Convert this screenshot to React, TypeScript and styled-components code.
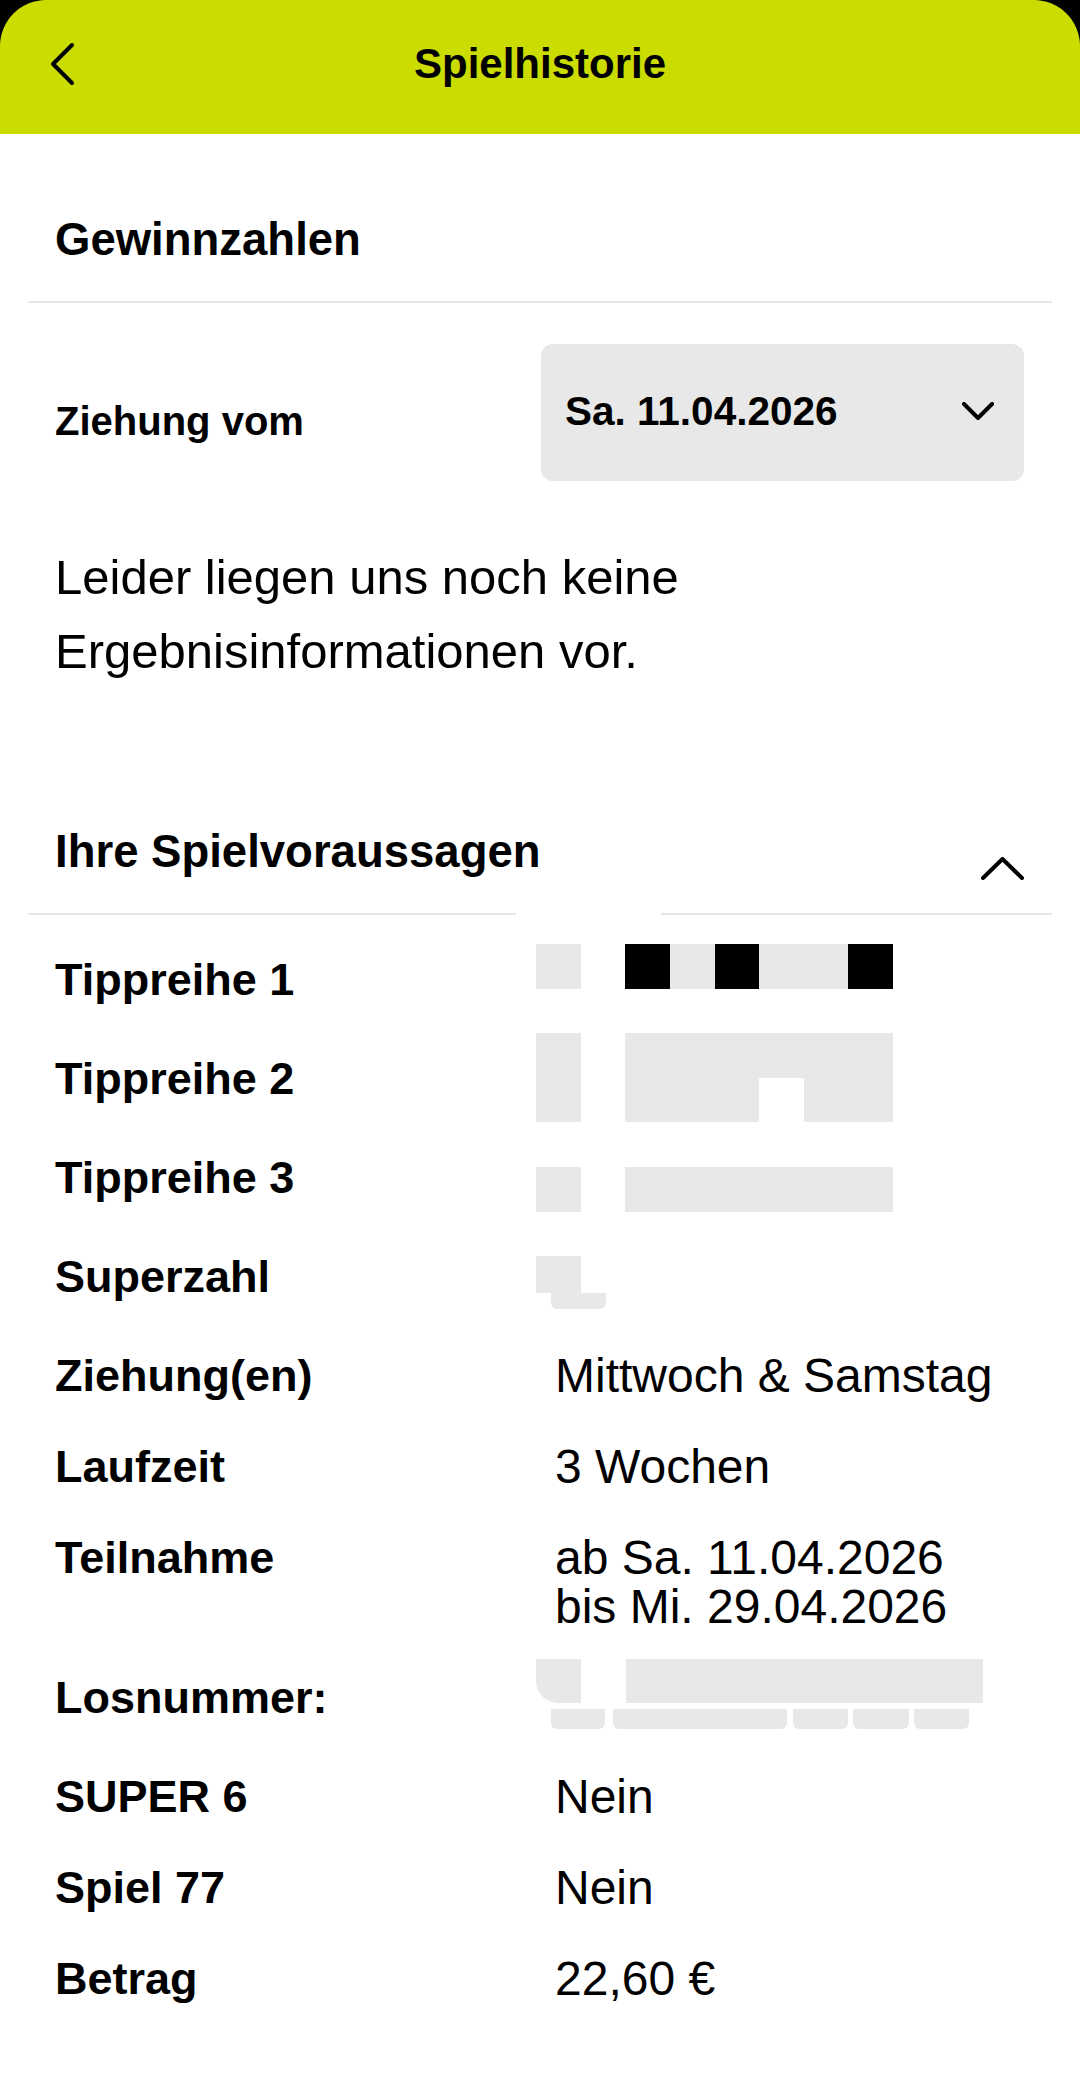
import React from "react";
import styled, { createGlobalStyle } from "styled-components";

const GlobalStyle = createGlobalStyle`
  html, body { margin: 0; padding: 0; background: #ffffff; }
  body {
    font-family: "Liberation Sans", Arial, sans-serif;
    color: #000000;
  }
  * { box-sizing: border-box; }
`;

const GRAY = "#e8e8e8";

const Screen = styled.div`
  width: 1080px;
  min-height: 2079px;
  background: #ffffff;
`;

const TopFrame = styled.div`
  background: #000000;
`;

const Header = styled.header`
  height: 134px;
  padding-top: 20px;
  background: #cadc00;
  border-radius: 46px 46px 0 0;
`;

const HeaderRow = styled.div`
  height: 88px;
  display: grid;
  grid-template-columns: 140px 1fr 140px;
  align-items: center;
`;

const BackButton = styled.button`
  border: 0;
  background: none;
  padding: 0 0 0 46px;
  height: 88px;
  display: flex;
  align-items: center;
  cursor: pointer;
  svg { display: block; }
`;

const Title = styled.h1`
  margin: 0;
  text-align: center;
  font-size: 42px;
  line-height: 88px;
  font-weight: 700;
`;

const SectionHead = styled.div<{ $top: number }>`
  margin: 0 28px;
  padding: ${(p) => p.$top}px 28px 33px 27px;
  display: flex;
  justify-content: space-between;
  align-items: flex-end;
  svg { display: block; }
`;

const Heading = styled.h2`
  margin: 0;
  font-size: 45.5px;
  line-height: 56px;
  font-weight: 700;
`;

const Divider = styled.div<{ $gap?: boolean }>`
  margin: 0 28px;
  height: 2px;
  background: ${(p) =>
    p.$gap
      ? `linear-gradient(to right, #e6e6e6 0 488px, transparent 488px 633px, #e6e6e6 633px)`
      : "#e6e6e6"};
`;

const DrawRow = styled.div`
  margin-top: 41px;
  padding: 0 56px 0 55px;
  display: grid;
  grid-template-columns: 1fr 483px;
  align-items: start;
`;

const DrawLabel = styled.div`
  padding-top: 53px;
  font-size: 40px;
  line-height: 48px;
  font-weight: 700;
`;

const DateSelect = styled.div`
  height: 137px;
  background: ${GRAY};
  border-radius: 12px;
  display: flex;
  align-items: center;
  justify-content: space-between;
  padding: 0 30px 4px 24px;
  svg { display: block; }
`;

const DateText = styled.span`
  font-size: 40.5px;
  line-height: 48px;
  font-weight: 700;
`;

const Notice = styled.p`
  margin: 59px 0 0;
  padding: 0 55px;
  font-size: 49px;
  line-height: 74px;
  font-weight: 400;
`;

const Table = styled.div`
  padding: 40px 28px 0 55px;
  display: flex;
  flex-direction: column;
  gap: 42px;
`;

const Row = styled.div<{ $tall?: boolean }>`
  display: grid;
  grid-template-columns: 481px 1fr;
  ${(p) => (p.$tall ? "height: 57px;" : "")}
`;

const Label = styled.div`
  font-size: 45px;
  line-height: 49px;
  font-weight: 700;
`;

const Value = styled.div`
  padding-left: 19px;
  font-size: 48px;
  line-height: 49px;
  font-weight: 400;
`;

const MaskCell = styled.div<{ $shift: number }>`
  margin-top: ${(p) => p.$shift}px;
`;

type Tone = "g" | "b" | "_";

const ChipGrid = styled.div`
  display: grid;
  grid-template-columns: repeat(8, 44.625px);
  grid-auto-rows: 44.5px;
`;

const Chip = styled.span<{ $tone: Tone }>`
  background: ${(p) =>
    p.$tone === "b" ? "#000000" : p.$tone === "g" ? GRAY : "transparent"};
`;

const MaskLine = styled.div<{ $top?: number }>`
  display: flex;
  margin-top: ${(p) => p.$top ?? 0}px;
`;

const Blot = styled.span<{ $w: number; $h: number; $x?: number; $round?: string }>`
  display: block;
  flex: none;
  width: ${(p) => p.$w}px;
  height: ${(p) => p.$h}px;
  margin-left: ${(p) => p.$x ?? 0}px;
  background: ${GRAY};
  border-radius: ${(p) => p.$round ?? "0"};
`;

const Chips = ({ rows }: { rows: string[] }) => (
  <ChipGrid>
    {rows.flatMap((r, ri) =>
      r.split("").map((t, ci) => <Chip key={`${ri}-${ci}`} $tone={t as Tone} />)
    )}
  </ChipGrid>
);

const BackIcon = () => (
  <svg width="32" height="48" viewBox="0 0 32 48" fill="none">
    <path
      d="M26 5 L7 24 L26 43"
      stroke="#000"
      strokeWidth="4"
      strokeLinecap="round"
      strokeLinejoin="round"
    />
  </svg>
);

const ChevronDown = () => (
  <svg width="32" height="18" viewBox="0 0 32 18" fill="none">
    <path
      d="M2 2 L16 16 L30 2"
      stroke="#000"
      strokeWidth="4"
      strokeLinecap="round"
      strokeLinejoin="round"
    />
  </svg>
);

const ChevronUp = () => (
  <svg width="43" height="23" viewBox="0 0 43 23" fill="none">
    <path
      d="M2 21 L21.5 2 L41 21"
      stroke="#000"
      strokeWidth="4"
      strokeLinecap="round"
      strokeLinejoin="round"
    />
  </svg>
);

export default function App() {
  return (
    <>
      <GlobalStyle />
      <Screen>
        <TopFrame>
          <Header>
            <HeaderRow>
              <BackButton aria-label="Zurück">
                <BackIcon />
              </BackButton>
              <Title>Spielhistorie</Title>
              <span />
            </HeaderRow>
          </Header>
        </TopFrame>

        <SectionHead $top={78}>
          <Heading>Gewinnzahlen</Heading>
        </SectionHead>
        <Divider />

        <DrawRow>
          <DrawLabel>Ziehung vom</DrawLabel>
          <DateSelect>
            <DateText>Sa. 11.04.2026</DateText>
            <ChevronDown />
          </DateSelect>
        </DrawRow>

        <Notice>Leider liegen uns noch keine Ergebnisinformationen vor.</Notice>

        <SectionHead $top={136}>
          <Heading>Ihre Spielvoraussagen</Heading>
          <ChevronUp />
        </SectionHead>
        <Divider $gap />

        <Table>
          <Row $tall>
            <Label>Tippreihe 1</Label>
            <MaskCell $shift={-11}>
              <Chips rows={["g_bgbggb"]} />
            </MaskCell>
          </Row>
          <Row $tall>
            <Label>Tippreihe 2</Label>
            <MaskCell $shift={-21}>
              <Chips rows={["g_gggggg", "g_ggg_gg"]} />
            </MaskCell>
          </Row>
          <Row $tall>
            <Label>Tippreihe 3</Label>
            <MaskCell $shift={14}>
              <Chips rows={["g_gggggg"]} />
            </MaskCell>
          </Row>
          <Row $tall>
            <Label>Superzahl</Label>
            <MaskCell $shift={4}>
              <Blot $w={45} $h={37} />
              <Blot $w={55} $h={16} $x={15} $round="0 0 6px 6px" />
            </MaskCell>
          </Row>
          <Row>
            <Label>Ziehung(en)</Label>
            <Value>Mittwoch &amp; Samstag</Value>
          </Row>
          <Row>
            <Label>Laufzeit</Label>
            <Value>3 Wochen</Value>
          </Row>
          <Row>
            <Label>Teilnahme</Label>
            <Value>
              ab Sa. 11.04.2026
              <br />
              bis Mi. 29.04.2026
            </Value>
          </Row>
          <Row $tall>
            <Label>Losnummer:</Label>
            <MaskCell $shift={-14}>
              <MaskLine>
                <Blot $w={45} $h={44} $round="0 0 0 22px" />
                <Blot $w={357} $h={44} $x={45} />
              </MaskLine>
              <MaskLine $top={6}>
                <Blot $w={54} $h={20} $x={15} $round="0 0 6px 6px" />
                <Blot $w={174} $h={20} $x={8} $round="0 0 6px 6px" />
                <Blot $w={55} $h={20} $x={6} $round="0 0 6px 6px" />
                <Blot $w={56} $h={20} $x={5} $round="0 0 6px 6px" />
                <Blot $w={55} $h={20} $x={5} $round="0 0 6px 6px" />
              </MaskLine>
            </MaskCell>
          </Row>
          <Row>
            <Label>SUPER 6</Label>
            <Value>Nein</Value>
          </Row>
          <Row>
            <Label>Spiel 77</Label>
            <Value>Nein</Value>
          </Row>
          <Row>
            <Label>Betrag</Label>
            <Value>22,60 €</Value>
          </Row>
        </Table>
      </Screen>
    </>
  );
}
